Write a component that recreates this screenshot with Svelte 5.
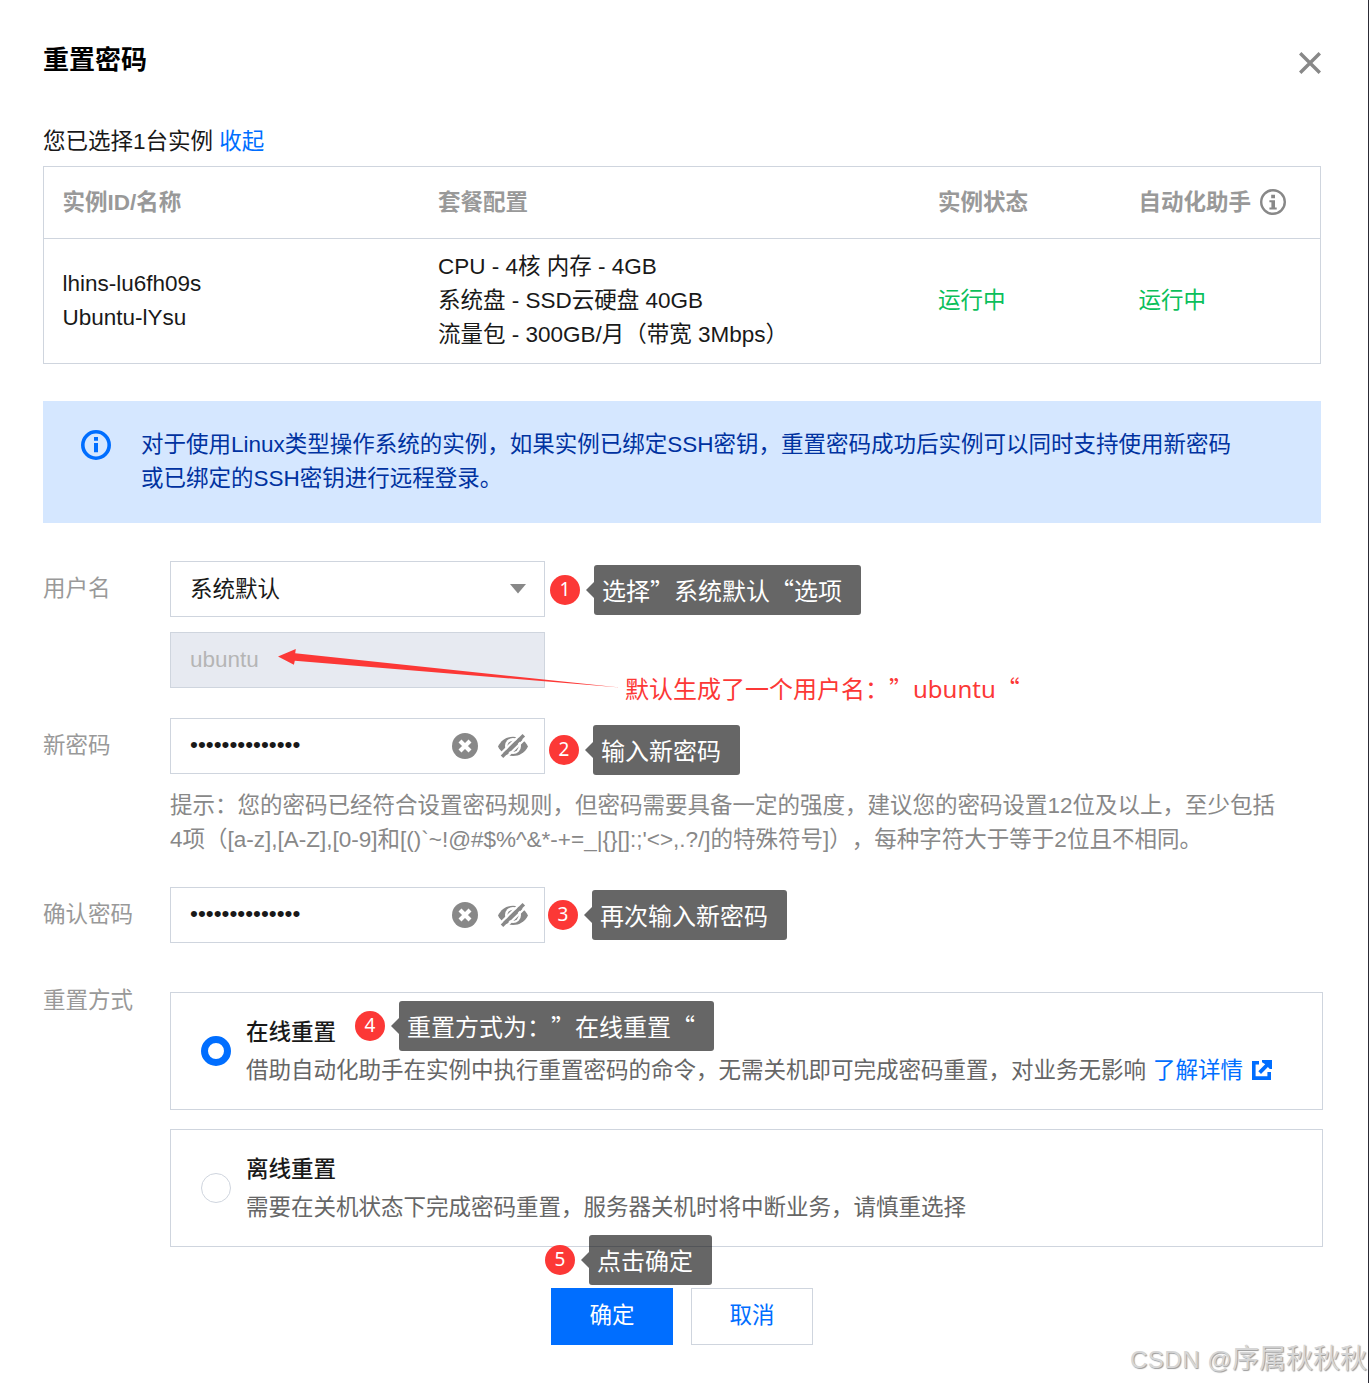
<script lang="ts">
	const dots = "•".repeat(14);

	let method = $state("online");

	const methods = [
		{
			id: "online",
			title: "在线重置",
			text: "借助自动化助手在实例中执行重置密码的命令，无需关机即可完成密码重置，对业务无影响",
			link: "了解详情",
		},
		{
			id: "offline",
			title: "离线重置",
			text: "需要在关机状态下完成密码重置，服务器关机时将中断业务，请慎重选择",
			link: "",
		},
	];

	const symbols = "[a-z],[A-Z],[0-9]和[()`~!@#$%^&*-+=_|{}[]:;'<>,.?/]的特殊符号]";
</script>

{#snippet note(step: number, text: string)}
	<div class="note note-{step}">
		<span class="note-step">{step}</span>
		<span class="note-text">{text}</span>
	</div>
{/snippet}

{#snippet passwordField()}
	<div class="input">
		<span class="input-value dots">{dots}</span>
		<svg class="icon-clear" viewBox="0 0 26 26">
			<circle cx="13" cy="13" r="13" fill="#888" />
			<path d="M8 8l10 10M18 8L8 18" stroke="#fff" stroke-width="4.200" />
		</svg>
		<svg class="icon-eye" viewBox="0 0 30 24">
			<path d="M0 12.500C3.200 6 8.600 2.700 15 2.700S26.800 6 30 12.500C26.800 18.800 21.400 22 15 22S3.200 18.800 0 12.500z" fill="#888" />
			<circle cx="15" cy="12" r="8" fill="#fff" />
			<circle cx="15" cy="12.300" r="5.600" fill="#888" />
			<path d="M2 20.500L23.500-.5M6.500 25L28 4" stroke="#fff" stroke-width="2.400" />
			<path d="M4 22.700L25.800 1.300" stroke="#888" stroke-width="3.600" />
		</svg>
	</div>
{/snippet}

<div class="dialog" lang="zh-CN">
	<header class="dialog-header">
		<h1>重置密码</h1>
		<button class="close" aria-label="关闭">
			<svg viewBox="0 0 22 22">
				<path d="M1.200 1.200l19.600 19.600M20.800 1.200L1.200 20.800" stroke="#888" stroke-width="3.400" />
			</svg>
		</button>
	</header>

	<p class="selected">您已选择1台实例 <a href="#collapse">收起</a></p>

	<div class="table">
		<div class="row head">
			<div>实例ID/名称</div>
			<div>套餐配置</div>
			<div>实例状态</div>
			<div class="with-icon">
				自动化助手
				<svg class="icon-help" viewBox="0 0 26 26">
					<circle cx="13" cy="13" r="11.800" fill="none" stroke="#888" stroke-width="2.400" />
					<path d="M11.200 5.700h3.800v3.500h-3.800zM9.400 11.300H15v7.200h1.700v2H9.400v-2h2v-5.200h-2z" fill="#888" />
				</svg>
			</div>
		</div>
		<div class="row body">
			<div>lhins-lu6fh09s<br />Ubuntu-lYsu</div>
			<div>CPU - 4核 内存 - 4GB<br />系统盘 - SSD云硬盘 40GB<br />流量包 - 300GB/月（带宽 3Mbps）</div>
			<div class="running">运行中</div>
			<div class="running">运行中</div>
		</div>
	</div>

	<div class="alert">
		<svg viewBox="0 0 30 30">
			<circle cx="15" cy="15" r="13.200" fill="none" stroke="#006eff" stroke-width="3.600" />
			<path d="M13 7h4v3.700h-4zM13 13h4v9.300h-4z" fill="#006eff" />
		</svg>
		<p>
			对于使用Linux类型操作系统的实例，如果实例已绑定SSH密钥，重置密码成功后实例可以同时支持使用新密码<br />
			或已绑定的SSH密钥进行远程登录。
		</p>
	</div>

	<div class="field">
		<span class="label">用户名</span>
		<div class="control">
			<div class="input">
				<span class="input-value">系统默认</span>
				<svg class="icon-arrow" viewBox="0 0 16 10"><path d="M0 0h16L8 9.500z" fill="#888" /></svg>
			</div>
			<div class="input disabled">ubuntu</div>
			{@render note(1, "选择”系统默认“选项")}
			<svg class="pointer" viewBox="0 0 344 40">
				<path d="M0 8.600L17.800 1l-.6 4.300L342 39.500 16.800 12.800l-.9 4z" fill="#fc3836" />
			</svg>
			<div class="remark">默认生成了一个用户名：”<span>ubuntu</span>“</div>
		</div>
	</div>

	<div class="field password">
		<span class="label">新密码</span>
		<div class="control">
			{@render passwordField()}
			<p class="hint">
				提示：您的密码已经符合设置密码规则，但密码需要具备一定的强度，建议您的密码设置12位及以上，至少包括<br />
				4项（{symbols}），每种字符大于等于2位且不相同。
			</p>
			{@render note(2, "输入新密码")}
		</div>
	</div>

	<div class="field confirm">
		<span class="label">确认密码</span>
		<div class="control">
			{@render passwordField()}
			{@render note(3, "再次输入新密码")}
		</div>
	</div>

	<div class="field method">
		<span class="label">重置方式</span>
		<div class="control cards">
			{#each methods as item}
				<label class="card">
					<input type="radio" name="method" value={item.id} bind:group={method} />
					<span class="card-content">
						<strong>{item.title}</strong>
						<span class="card-text">
							{item.text}
							{#if item.link}
								<a href="#detail">{item.link}</a>
								<svg class="icon-link" viewBox="0 0 20 20">
									<path
										d="M0 1h7v3.500H3.600v11.800h11.800V12H19v8H0zM10 0h10v9h-2.200L15.900 7 9 13.900l-2.700-2.700L13.200 4.300 10 2.200z"
										fill="#006eff"
									/>
								</svg>
							{/if}
						</span>
					</span>
				</label>
			{/each}
			{@render note(4, "重置方式为：”在线重置“")}
		</div>
	</div>

	<footer class="actions">
		<button class="primary">确定</button>
		<button>取消</button>
		{@render note(5, "点击确定")}
	</footer>

	<div class="watermark"><span>CSDN @</span>序属秋秋秋</div>
</div>

<style>
	:global(body) {
		background: #fff;
		overflow: hidden;
	}

	.dialog {
		border-right: 1px solid #2c2c36;
		box-sizing: border-box;
		color: #191919;
		font-family: "Liberation Sans", "Noto Sans CJK SC", sans-serif;
		font-size: 22.5px;
		height: 1383px;
		line-height: 34px;
		overflow: hidden;
		padding: 43px 0 0 43px;
		position: relative;
		text-spacing-trim: space-all;
		width: 1369px;
	}

	p, h1 {
		margin: 0;
	}

	a {
		color: #006eff;
		text-decoration: none;
	}

	.dialog-header {
		display: flex;
		height: 82px;
		justify-content: space-between;
		width: 1278px;
	}

	h1 {
		color: #000;
		font-size: 26px;
		line-height: 34px;
	}

	.close {
		background: none;
		border: none;
		height: 22px;
		margin-top: 9px;
		padding: 0;
		width: 22px;
	}

	svg {
		display: block;
		flex: none;
	}

	.selected {
		height: 41px;
	}

	.table {
		border: 1px solid #cfd5de;
		box-sizing: border-box;
		height: 198px;
		width: 1278px;
	}

	.row {
		align-items: center;
		display: grid;
		grid-template-columns: 375.500px 500px 200.500px 1fr;
		padding-left: 18.500px;
	}

	.head {
		border-bottom: 1px solid #cfd5de;
		color: #999;
		font-weight: bold;
		height: 71px;
	}

	.body {
		height: 124px;
	}

	.with-icon {
		align-items: center;
		display: flex;
		gap: 9px;
	}

	.icon-help {
		height: 26px;
		margin-top: -1px;
		width: 26px;
	}

	.running {
		color: #0abf5b;
	}

	.alert {
		background: #d5e7ff;
		box-sizing: border-box;
		color: #0032a0;
		display: flex;
		gap: 30px;
		height: 122px;
		margin-top: 37px;
		padding: 27px 0 0 38px;
		white-space: nowrap;
		width: 1278px;
	}

	.alert svg {
		height: 30px;
		margin-top: 2px;
		width: 30px;
	}

	.field {
		display: flex;
		margin-top: 38px;
	}

	.label {
		color: #999;
		padding-top: 11px;
		width: 127px;
	}

	.control {
		position: relative;
	}

	.input {
		align-items: center;
		border: 1px solid #cfd5de;
		box-sizing: border-box;
		display: flex;
		height: 56px;
		padding: 0 16px 0 19px;
		width: 375px;
	}

	.input-value {
		flex: 1;
		padding-top: 2px;
	}

	.input-value.dots {
		padding: 0 0 2px;
	}

	.input.disabled {
		background: #e7eaf1;
		color: #b5b5b5;
		margin-top: 15px;
		padding-bottom: 1px;
	}

	.icon-arrow {
		height: 10px;
		margin-right: 2px;
		width: 16px;
	}

	.icon-clear {
		height: 26px;
		margin-right: 20px;
		width: 26px;
	}

	.icon-eye {
		height: 24px;
		width: 30px;
	}

	.password {
		margin-top: 30px;
	}

	.hint {
		color: #888;
		margin-top: 15px;
		white-space: nowrap;
	}

	.confirm {
		margin-top: 30px;
	}

	.method {
		margin-top: 49px;
	}

	.method .label {
		padding-top: 0;
		margin-top: -8px;
	}

	.cards {
		display: flex;
		flex-direction: column;
		gap: 19px;
	}

	.card {
		align-items: center;
		border: 1px solid #cfd5de;
		box-sizing: border-box;
		display: flex;
		height: 118px;
		padding-left: 30px;
		width: 1153px;
	}

	.card input {
		appearance: none;
		border: 1px solid #cfd5de;
		border-radius: 50%;
		box-sizing: border-box;
		height: 30px;
		margin: 0 15px 0 0;
		width: 30px;
	}

	.card input:checked {
		border: 7.500px solid #006eff;
	}

	.card-content {
		display: flex;
		flex-direction: column;
		gap: 4px;
		padding-top: 2px;
	}

	.card strong {
		font-weight: 500;
	}

	.card-text {
		align-items: center;
		color: #666;
		display: flex;
		gap: 7px;
		white-space: nowrap;
	}

	.icon-link {
		height: 20px;
		margin: -2px 0 0 2px;
		width: 20px;
	}

	.actions {
		display: flex;
		gap: 18px;
		margin: 41px 0 0 508px;
		position: relative;
	}

	.actions button {
		background: #fff;
		border: 1px solid #cfd5de;
		color: #006eff;
		font: inherit;
		height: 57px;
		padding: 0 0 2px;
		width: 122px;
	}

	.actions .primary {
		background: #006eff;
		border-color: #006eff;
		color: #fff;
	}

	.note {
		align-items: center;
		display: flex;
		font-family: "Noto Sans CJK SC", sans-serif;
		font-size: 24px;
		gap: 14px;
		position: absolute;
		white-space: nowrap;
	}

	.note-1 {
		left: 380px;
		top: 4px;
	}

	.note-2 {
		left: 379px;
		top: 7px;
	}

	.note-3 {
		left: 378px;
		top: 3px;
	}

	.note-4 {
		left: 185px;
		top: 9px;
	}

	.note-5 {
		left: -6px;
		top: -53px;
	}

	.note-step {
		background: #fc3836;
		border-radius: 50%;
		color: #fff;
		font-family: "Noto Sans", sans-serif;
		font-size: 19px;
		height: 30px;
		line-height: 29px;
		text-align: center;
		width: 30px;
	}

	.note-text {
		background: rgba(0, 0, 0, .6);
		border-radius: 3px;
		box-sizing: border-box;
		color: #fff;
		height: 50px;
		line-height: 49px;
		padding: 0 19px 0 8px;
		position: relative;
	}

	.note-text::before {
		border: 8px solid transparent;
		border-left-width: 0;
		border-right-color: rgba(0, 0, 0, .6);
		content: "";
		left: -8px;
		position: absolute;
		top: 17px;
	}

	.pointer {
		height: 40px;
		left: 108px;
		position: absolute;
		top: 87px;
		width: 344px;
	}

	.remark {
		color: #fc3836;
		font-family: "Noto Sans CJK SC", sans-serif;
		font-size: 24px;
		left: 455px;
		position: absolute;
		top: 110px;
		white-space: nowrap;
	}

	.remark span {
		font-family: "Noto Sans", sans-serif;
	}

	.watermark {
		bottom: 6px;
		color: #d6d6d6;
		font-size: 27px;
		position: absolute;
		right: 1px;
		text-shadow: 1px 1px 1px #999;
		white-space: nowrap;
	}

	.watermark span {
		font-size: 24px;
		letter-spacing: .5px;
	}
</style>
